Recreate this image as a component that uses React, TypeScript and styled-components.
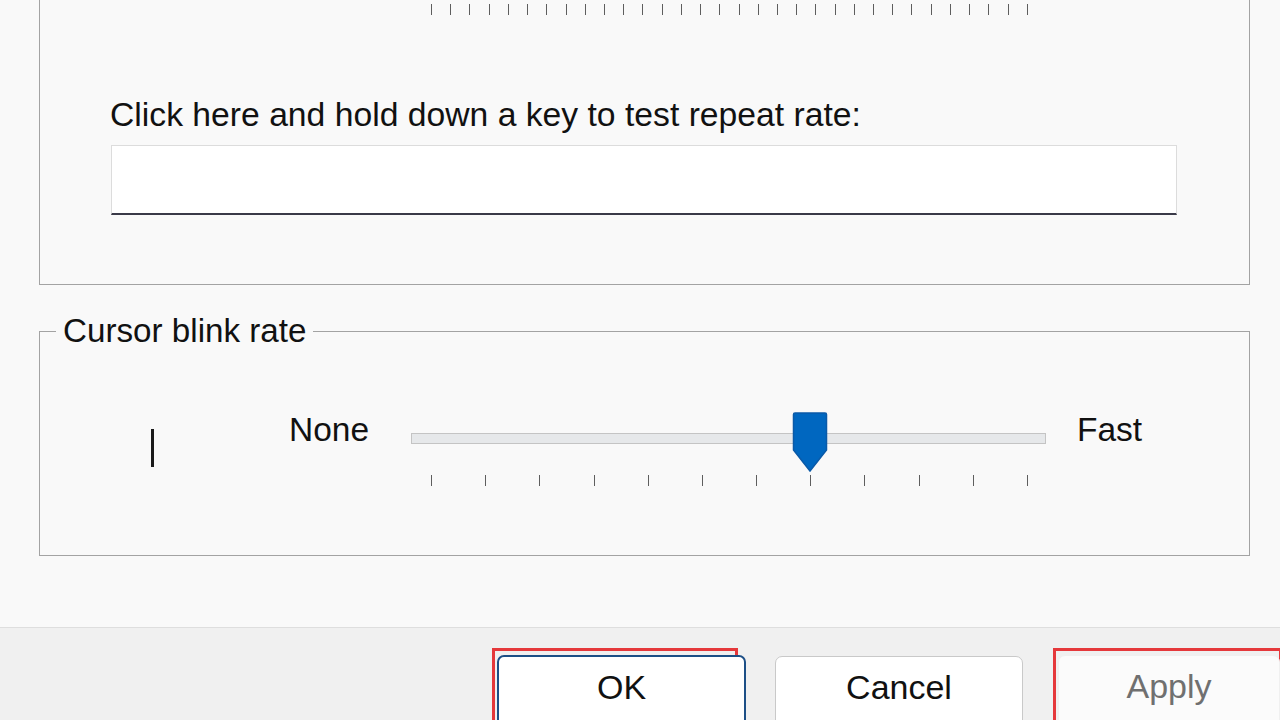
import React from 'react';
import styled, { createGlobalStyle } from 'styled-components';

const GlobalStyle = createGlobalStyle`
  html, body {
    margin: 0;
    padding: 0;
    background: #f9f9f9;
    overflow: hidden;
  }
  body {
    font-family: "Liberation Sans", Arial, sans-serif;
    color: #111;
  }
`;

const Window = styled.div`
  width: 1280px;
  height: 720px;
  display: flex;
  flex-direction: column;
  background: #f9f9f9;
`;

const Body = styled.div`
  flex: 1;
  display: flex;
  flex-direction: column;
  gap: 46px;
  padding: 0 30px 0 39px;
`;

// the top group is scrolled past its caption, so only three sides show
const GroupBox = styled.div<{ $open?: boolean; $height: number }>`
  position: relative;
  height: ${p => p.$height}px;
  border: 1px solid #a3a3a3;
  border-top: ${p => (p.$open ? 'none' : '1px solid #a3a3a3')};
  box-sizing: border-box;
`;

const Legend = styled.span`
  position: absolute;
  top: -19px;
  left: 16px;
  padding: 0 7px;
  background: #f9f9f9;
  font-size: 33.2px;
  line-height: 36px;
`;

const TickRow = styled.div<{ $top: number }>`
  margin-left: 391px;
  margin-top: ${p => p.$top}px;
  width: 597px;
  height: 11px;
  display: flex;
  justify-content: space-between;
`;

const Tick = styled.span`
  width: 1px;
  height: 11px;
  background: #5e5e5e;
`;

const Prompt = styled.div`
  margin: 81px 0 0 70px;
  font-size: 33.7px;
  line-height: 36px;
`;

const TestInput = styled.div`
  margin: 13px 0 0 71px;
  width: 1066px;
  height: 70px;
  box-sizing: border-box;
  background: #fff;
  border: 1px solid #dcdcdc;
  border-bottom: 2px solid #3a3a48;
`;

const SliderLine = styled.div`
  display: flex;
  align-items: center;
  margin-top: 78px;
  padding-left: 111px;
  height: 40px;
`;

const CursorBar = styled.span`
  width: 3px;
  height: 38px;
  background: #1a1a1a;
  transform: translateY(18px);
`;

const SliderLabel = styled.span<{ $ml: number; $w: number }>`
  margin-left: ${p => p.$ml}px;
  width: ${p => p.$w}px;
  flex-shrink: 0;
  font-size: 33.5px;
  line-height: 36px;
`;

const Track = styled.div`
  position: relative;
  width: 635px;
  height: 11px;
  flex-shrink: 0;
  box-sizing: border-box;
  background: #e6e8ea;
  border: 1px solid #c4c4c4;
  transform: translateY(8px);
`;

const Thumb = styled.svg`
  position: absolute;
  left: 380px;
  top: -22px;
`;

const Footer = styled.div`
  height: 93px;
  border-top: 1px solid #dedede;
  background: #f0f0f0;
  display: flex;
  align-items: flex-start;
  padding-top: 20px;
  box-sizing: border-box;
`;

const Highlight = styled.div<{ $w: number; $ml: number }>`
  margin-left: ${p => p.$ml}px;
  width: ${p => p.$w}px;
  height: 80px;
  border: 3px solid #e5383b;
  box-sizing: border-box;
  display: flex;
  padding: 4px 0 0 2px;
`;

const Button = styled.button<{ $primary?: boolean; $disabled?: boolean; $w: number }>`
  width: ${p => p.$w}px;
  height: 80px;
  flex-shrink: 0;
  box-sizing: border-box;
  border-radius: 7px;
  background: ${p => (p.$disabled ? '#fbfbfb' : '#fff')};
  border: ${p =>
    p.$primary ? '2px solid #1d4f86' : p.$disabled ? '1px solid #f0f0f0' : '1px solid #c9c9c9'};
  color: ${p => (p.$disabled ? '#707070' : '#111')};
  font-family: "Liberation Sans", Arial, sans-serif;
  font-size: 34px;
  line-height: 36px;
  padding: 12px 0 0;
  display: flex;
  justify-content: center;
  align-items: flex-start;
`;

const CancelWrap = styled.div`
  margin-left: 37px;
  padding-top: 8px;
`;

function Ticks({ count, top }: { count: number; top: number }) {
  return (
    <TickRow $top={top}>
      {Array.from({ length: count }, (_, i) => (
        <Tick key={i} />
      ))}
    </TickRow>
  );
}

export default function App() {
  return (
    <Window>
      <GlobalStyle />
      <Body>
        <GroupBox $open $height={285}>
          <Ticks count={32} top={4} />
          <Prompt>Click here and hold down a key to test repeat rate:</Prompt>
          <TestInput />
        </GroupBox>

        <GroupBox $height={225}>
          <Legend>Cursor blink rate</Legend>
          <SliderLine>
            <CursorBar />
            <SliderLabel $ml={135} $w={122}>None</SliderLabel>
            <Track>
              <Thumb width="36" height="61" viewBox="0 0 36 61">
                <path
                  d="M1.5 2.5 Q1.5 1 3 1 L33 1 Q34.5 1 34.5 2.5 L34.5 38 L18 59 L1.5 38 Z"
                  fill="#0067c0"
                  stroke="#0a5aa8"
                  strokeWidth="1.5"
                />
              </Thumb>
            </Track>
            <SliderLabel $ml={31} $w={100}>Fast</SliderLabel>
          </SliderLine>
          <Ticks count={12} top={25} />
        </GroupBox>
      </Body>

      <Footer>
        <Highlight $ml={492} $w={246}>
          <Button $primary $w={249}>OK</Button>
        </Highlight>
        <CancelWrap>
          <Button $w={248}>Cancel</Button>
        </CancelWrap>
        <Highlight $ml={30} $w={229}>
          <Button $disabled $w={222}>Apply</Button>
        </Highlight>
      </Footer>
    </Window>
  );
}
